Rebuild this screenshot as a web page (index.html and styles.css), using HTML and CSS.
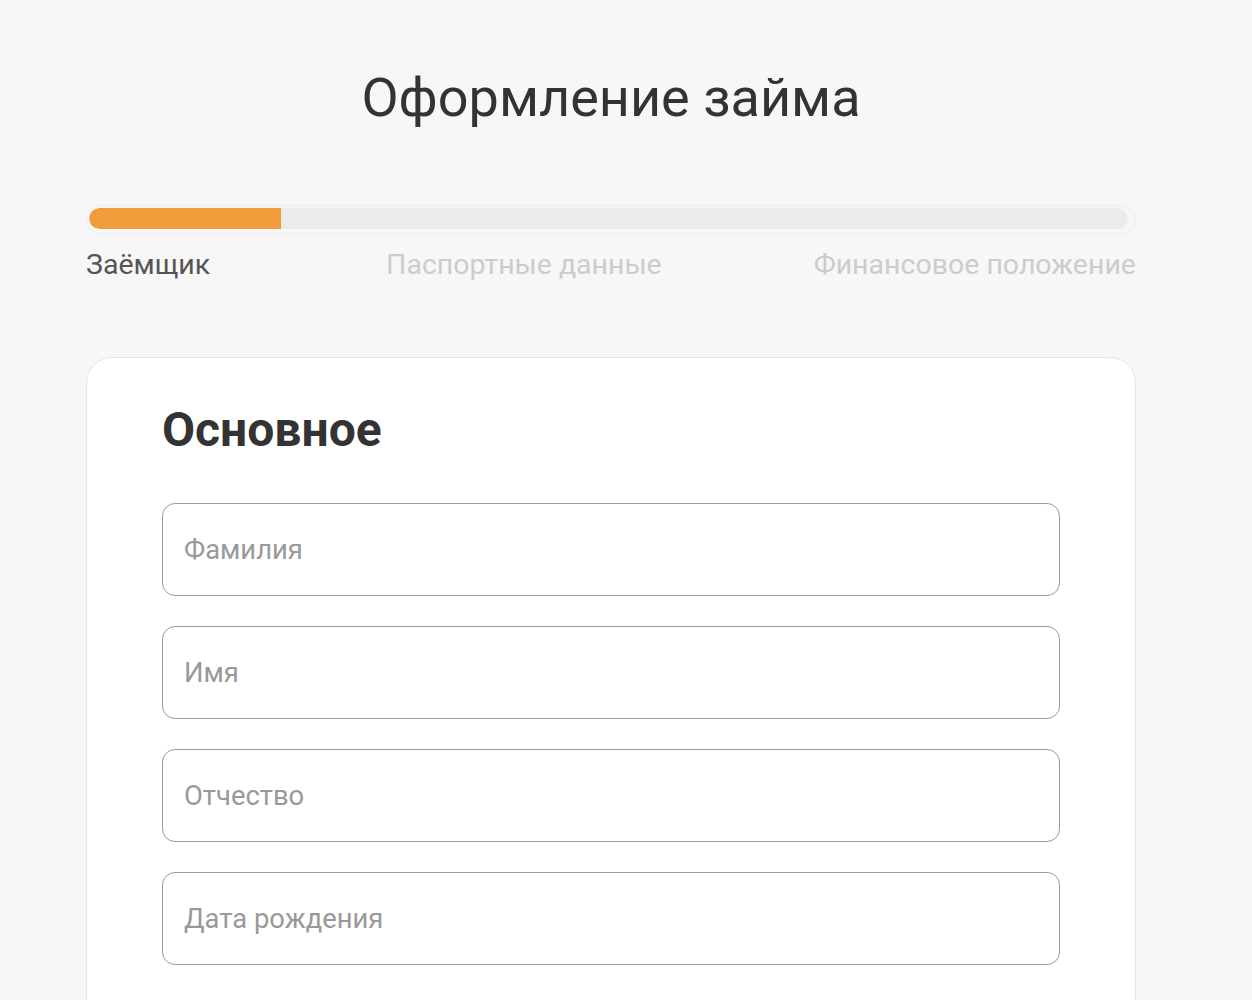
FILE: index.html
```html
<!DOCTYPE html>
<html lang="ru">
<head>
<meta charset="utf-8">
<title>Оформление займа</title>
<link rel="stylesheet" href="styles.css">
</head>
<body>
<main class="page">
  <h1 class="title">Оформление займа</h1>
  <div class="progress">
    <div class="progress-track">
      <div class="progress-fill" style="width: 18.5%"></div>
    </div>
  </div>
  <div class="steps">
    <span class="step step-active">Заёмщик</span>
    <span class="step step-mid">Паспортные данные</span>
    <span class="step">Финансовое положение</span>
  </div>
  <section class="card">
    <h2 class="card-title">Основное</h2>
    <form class="fields">
      <input class="field" type="text" placeholder="Фамилия">
      <input class="field" type="text" placeholder="Имя">
      <input class="field" type="text" placeholder="Отчество">
      <input class="field" type="text" placeholder="Дата рождения">
    </form>
  </section>
</main>
</body>
</html>
```

FILE: styles.css
```css
* { box-sizing: border-box; }
html, body {
  margin: 0;
  padding: 0;
  background: #f7f7f7;
  font-family: Roboto, "Noto Sans", "Liberation Sans", sans-serif;
  color: #333;
}
body { overflow: hidden; height: 1000px; }
.page {
  width: 1050px;
  margin-left: 86px;
  padding-top: 64px;
}
.title {
  margin: 0;
  text-align: center;
  font-size: 54px;
  font-weight: 400;
  line-height: 68px;
  color: #333;
}
.progress {
  margin-top: 73px;
  height: 29px;
  border: 1px solid #eeeeee;
  border-radius: 15px;
  padding: 2px 7px 2px 2px;
  background: #f7f7f7;
}
.progress-track {
  height: 21px;
  border-radius: 11px;
  background: #ebebeb;
  overflow: hidden;
}
.progress-fill {
  height: 100%;
  background: #f09c3a;
  border-radius: 11px 0 0 11px;
}
.steps {
  display: flex;
  justify-content: space-between;
  margin-top: 14px;
  font-size: 28.5px;
  line-height: 34px;
  color: #cccccc;
}
.step-active { color: #555555; }
.step-mid { margin-left: 24px; }
.card {
  margin-top: 75px;
  background: #ffffff;
  border: 1px solid #e6e6e6;
  border-radius: 26px;
  padding: 44px 75px 60px;
  min-height: 700px;
}
.card-title {
  margin: 0;
  font-size: 48px;
  font-weight: 700;
  line-height: 56px;
  color: #333;
}
.fields {
  margin-top: 45px;
  display: flex;
  flex-direction: column;
  gap: 30px;
}
.field {
  display: block;
  width: 100%;
  height: 93px;
  border: 1px solid #9a9a9a;
  border-radius: 13px;
  padding: 0 21px;
  font-family: inherit;
  font-size: 27.4px;
  color: #333;
  background: #fff;
  outline: none;
}
.field::placeholder { color: #999999; }
```
